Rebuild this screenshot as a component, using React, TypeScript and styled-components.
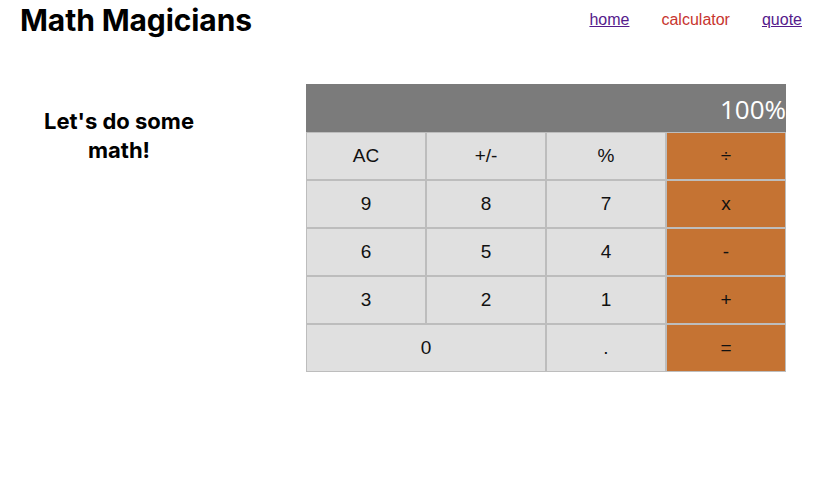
import React from 'react';
import styled, { createGlobalStyle } from 'styled-components';

const GlobalStyle = createGlobalStyle`
  html, body { margin: 0; padding: 0; background: #fff; }
  body { font-family: Inter, "Liberation Sans", sans-serif; color: #000; }
  * { box-sizing: border-box; }
`;

const Header = styled.header`
  display: flex;
  justify-content: space-between;
  align-items: center;
  height: 40px;
  padding: 0 26px 0 20px;
`;

const Title = styled.h1`
  margin: 0;
  font-family: Inter, sans-serif;
  font-weight: 700;
  font-size: 30px;
  letter-spacing: -0.1px;
`;

const Nav = styled.nav`
  display: flex;
  gap: 32px;
  font-family: "Liberation Sans", Arial, sans-serif;
  font-size: 16px;
`;

const NavLink = styled.a<{ $active?: boolean }>`
  color: ${(p) => (p.$active ? '#c7352f' : '#551a8b')};
  text-decoration: ${(p) => (p.$active ? 'none' : 'underline')};
  cursor: pointer;
`;

const Main = styled.main`
  display: flex;
  align-items: flex-start;
  padding-top: 44px;
`;

const Intro = styled.section`
  width: 238px;
  padding-top: 23px;
  text-align: center;
`;

const IntroText = styled.h2`
  margin: 0 auto;
  width: 180px;
  font-family: Inter, sans-serif;
  font-weight: 700;
  font-size: 22px;
  line-height: 29px;
`;

const Calculator = styled.div`
  margin-left: auto;
  margin-right: 42px;
  width: 480px;
  display: grid;
  grid-template-columns: repeat(4, 120px);
`;

const Display = styled.div`
  grid-column: 1 / -1;
  height: 48px;
  background: #7b7b7b;
  color: #fff;
  font-family: "Open Sans", sans-serif;
  font-size: 26px;
  display: flex;
  align-items: center;
  justify-content: flex-end;
  padding-top: 1px;
`;

const Key = styled.button<{ $op?: boolean; $wide?: boolean }>`
  grid-column: ${(p) => (p.$wide ? 'span 2' : 'auto')};
  height: 48px;
  margin: 0;
  border: 1px solid #bdbdbd;
  background: ${(p) => (p.$op ? '#c57333' : '#e0e0e0')};
  color: #111;
  font-family: "Liberation Sans", Arial, sans-serif;
  font-size: 19px;
  padding: 0;
  cursor: pointer;
`;

const keys: { label: string; op?: boolean; wide?: boolean }[] = [
  { label: 'AC' }, { label: '+/-' }, { label: '%' }, { label: '÷', op: true },
  { label: '9' }, { label: '8' }, { label: '7' }, { label: 'x', op: true },
  { label: '6' }, { label: '5' }, { label: '4' }, { label: '-', op: true },
  { label: '3' }, { label: '2' }, { label: '1' }, { label: '+', op: true },
  { label: '0', wide: true }, { label: '.' }, { label: '=', op: true },
];

export default function App() {
  return (
    <>
      <GlobalStyle />
      <Header>
        <Title>Math Magicians</Title>
        <Nav>
          <NavLink href="#home">home</NavLink>
          <NavLink $active>calculator</NavLink>
          <NavLink href="#quote">quote</NavLink>
        </Nav>
      </Header>
      <Main>
        <Intro>
          <IntroText>Let's do some math!</IntroText>
        </Intro>
        <Calculator>
          <Display>100%</Display>
          {keys.map((k) => (
            <Key key={k.label} $op={k.op} $wide={k.wide}>
              {k.label}
            </Key>
          ))}
        </Calculator>
      </Main>
    </>
  );
}
